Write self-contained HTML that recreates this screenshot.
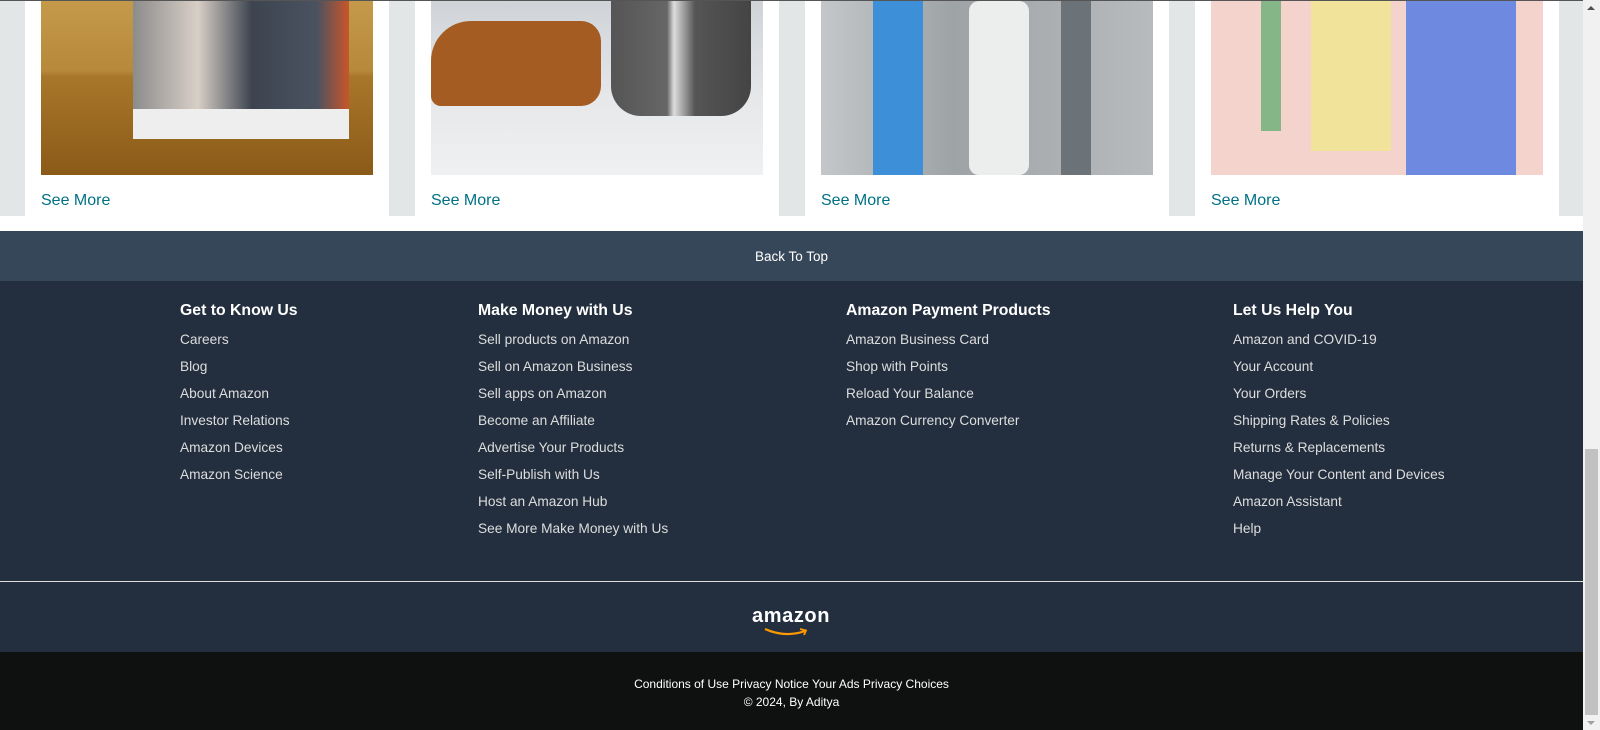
<!DOCTYPE html>
<html><head><meta charset="utf-8"><style>
*{margin:0;padding:0;box-sizing:border-box}
body{width:1600px;height:730px;overflow:hidden;background:#fff;font-family:"Liberation Sans",Arial,sans-serif;position:relative}
.main{position:absolute;left:0;top:0;width:1583px;height:730px}
.topline{position:absolute;left:0;top:0;width:1583px;height:1px;background:#555}
.gray{position:absolute;left:0;top:1px;width:1583px;height:215px;background:#e3e6e6}
.card{position:absolute;top:1px;width:364px;height:215px;background:#fff}
.img{position:absolute;left:16px;top:0;width:332px;height:174px}
.see{position:absolute;left:16px;top:191px;font-size:16px;color:#007185}
.btt{position:absolute;left:0;top:231px;width:1583px;height:50px;background:#37475a;color:#fff;font-size:13.5px;text-align:center;line-height:52px}
.foot{position:absolute;left:0;top:281px;width:1583px;height:300px;background:#232f3e}
.col{position:absolute;top:20px;color:#ddd}
.col h3{color:#fff;font-size:15.8px;font-weight:bold;margin-bottom:5px;line-height:20px}
.col a{display:block;font-size:13.7px;line-height:27px;color:#ddd;text-decoration:none}
.line{position:absolute;left:0;top:581px;width:1583px;height:1px;background:#ddd}
.logo{position:absolute;left:0;top:582px;width:1583px;height:70px;background:#232f3e}
.bot{position:absolute;left:0;top:652px;width:1583px;height:78px;background:#0f1111;color:#fff;font-size:12px;text-align:center}
.sb{position:absolute;left:1583px;top:0;width:17px;height:730px;background:#f1f1f1}
</style></head><body>
<div class="main">
<div class="gray"></div>
<div class="card" style="left:25px"><div class="img" style="background:linear-gradient(180deg,#c49a4a 0,#b7893a 70px,#a9772a 75px,#8a5a18 174px)"><div style="position:absolute;left:92px;top:0;width:216px;height:138px;background:linear-gradient(90deg,#8c8c8c,#d8cfc6 30%,#3d4450 55%,#4a5260 85%,#c9552a);"></div><div style="position:absolute;left:92px;top:108px;width:216px;height:30px;background:#eee"></div></div><div class="see">See More</div></div>
<div class="card" style="left:415px"><div class="img" style="background:linear-gradient(180deg,#cfd3d8,#e6e8ea 100px,#eef0f2)"><div style="position:absolute;left:0;top:20px;width:170px;height:85px;background:#a45c22;border-radius:40px 20px 20px 10px"></div><div style="position:absolute;left:180px;top:0;width:140px;height:115px;background:linear-gradient(90deg,#555 0,#666 40%,#ddd 45%,#555 60%,#444);border-radius:0 0 30px 30px"></div></div><div class="see">See More</div></div>
<div class="card" style="left:805px"><div class="img" style="background:linear-gradient(90deg,#c4c7c9,#9ea3a6 40%,#b8bbbe)"><div style="position:absolute;left:52px;top:0;width:50px;height:174px;background:#3d8fd8"></div><div style="position:absolute;left:148px;top:0;width:60px;height:174px;background:#eceeee;border-radius:10px"></div><div style="position:absolute;left:240px;top:0;width:30px;height:174px;background:#6b7378"></div></div><div class="see">See More</div></div>
<div class="card" style="left:1195px"><div class="img" style="background:#f4d3cc"><div style="position:absolute;left:100px;top:0;width:80px;height:150px;background:#f1e39a"></div><div style="position:absolute;left:195px;top:0;width:110px;height:174px;background:#6e8ae0"></div><div style="position:absolute;left:50px;top:0;width:20px;height:130px;background:#3aa35a;opacity:.6"></div></div><div class="see">See More</div></div>
<div class="topline"></div>
<div class="btt">Back To Top</div>
<div class="foot">
<div class="col" style="left:180px"><h3>Get to Know Us</h3><a>Careers</a><a>Blog</a><a>About Amazon</a><a>Investor Relations</a><a>Amazon Devices</a><a>Amazon Science</a></div>
<div class="col" style="left:478px"><h3>Make Money with Us</h3><a>Sell products on Amazon</a><a>Sell on Amazon Business</a><a>Sell apps on Amazon</a><a>Become an Affiliate</a><a>Advertise Your Products</a><a>Self-Publish with Us</a><a>Host an Amazon Hub</a><a>See More Make Money with Us</a></div>
<div class="col" style="left:846px"><h3>Amazon Payment Products</h3><a>Amazon Business Card</a><a>Shop with Points</a><a>Reload Your Balance</a><a>Amazon Currency Converter</a></div>
<div class="col" style="left:1233px"><h3>Let Us Help You</h3><a>Amazon and COVID-19</a><a>Your Account</a><a>Your Orders</a><a>Shipping Rates &amp; Policies</a><a>Returns &amp; Replacements</a><a>Manage Your Content and Devices</a><a>Amazon Assistant</a><a>Help</a></div>
</div>
<div class="line"></div>
<div class="logo"><div style="position:absolute;left:752px;top:23px;color:#fff;font-weight:bold;font-size:20px;letter-spacing:0.6px">amazon</div>
<svg style="position:absolute;left:763px;top:45px" width="48" height="12" viewBox="0 0 48 12"><path d="M2 2 Q22 11 42 4" stroke="#f90" stroke-width="2.2" fill="none"/><path d="M37 2 L43 3.5 L41 8" stroke="#f90" stroke-width="1.8" fill="none"/></svg></div>
<div class="bot"><div style="padding-top:25px;line-height:15px">Conditions of Use Privacy Notice Your Ads Privacy Choices</div><div style="line-height:20px">© 2024, By Aditya</div></div>
</div>
<div class="sb"><div style="position:absolute;left:4px;top:6px;width:0;height:0;border-left:4px solid transparent;border-right:4px solid transparent;border-bottom:4px solid #505050"></div><div style="position:absolute;left:2px;top:449px;width:13px;height:266px;background:#c1c1c1"></div><div style="position:absolute;left:4px;top:721px;width:0;height:0;border-left:4px solid transparent;border-right:4px solid transparent;border-top:4px solid #a0a0a0"></div></div>
</body></html>
